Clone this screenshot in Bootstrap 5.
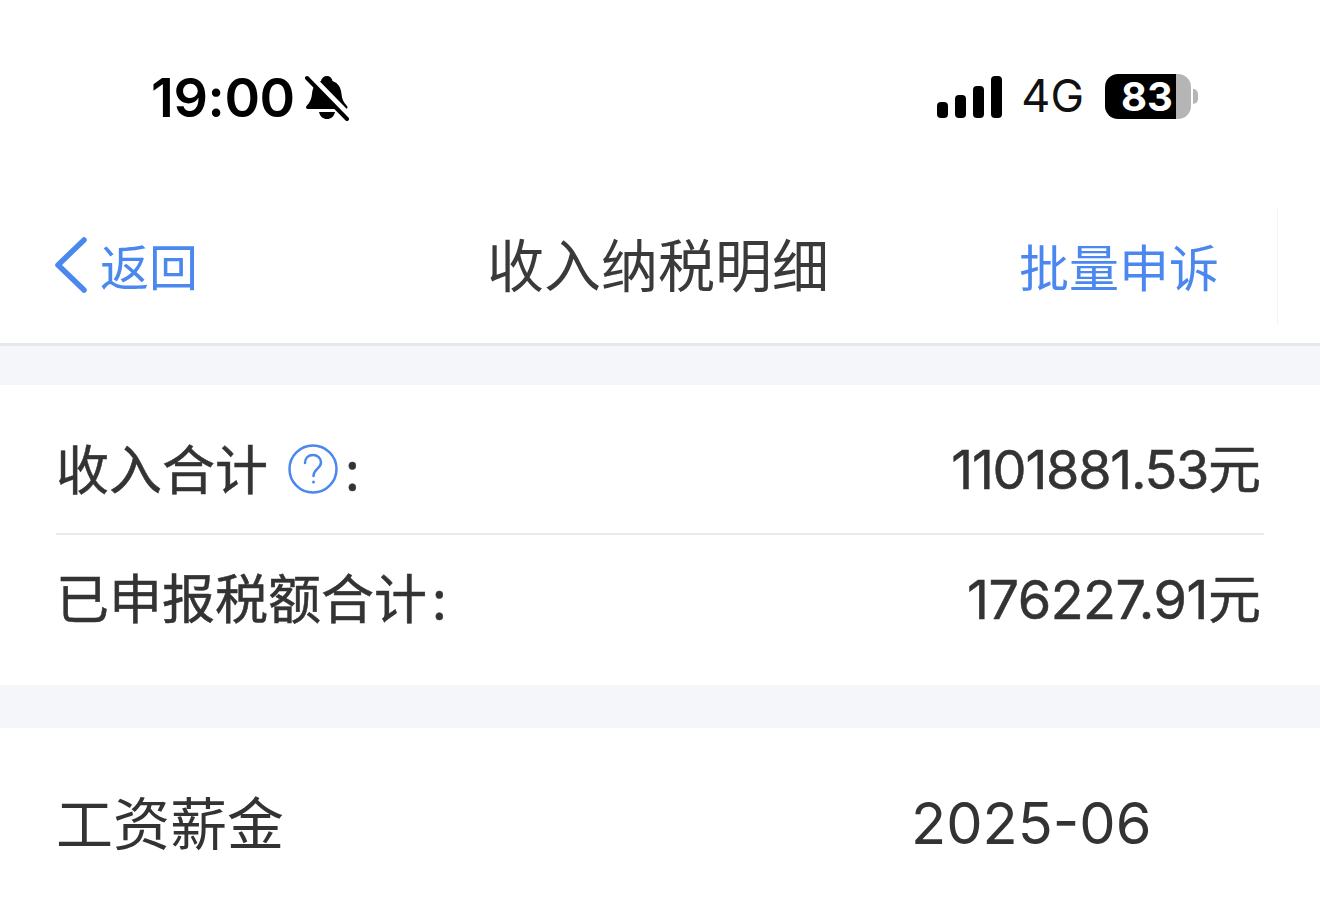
<!DOCTYPE html>
<html lang="zh-CN">
<head>
<meta charset="utf-8">
<title>收入纳税明细</title>
<link rel="stylesheet" href="https://cdn.jsdelivr.net/npm/bootstrap@5.3.0/dist/css/bootstrap.min.css">
<style>
html,body{height:899px;overflow:hidden;background:#fff;}
body{font-family:"Liberation Sans","Noto Sans CJK SC",sans-serif;color:#333;}
.status-strip{height:208px;padding:0 122px 0 151px;align-items:flex-start;}
.status-left{height:48px;margin-top:74px;gap:10px;}
.clock-text{font-family:Inter,"Liberation Sans",sans-serif;font-size:54px;font-weight:600;line-height:48px;color:#000;letter-spacing:-.4px;}
.status-right{height:48px;margin-top:72px;}
.signal-ico{margin:1px 0 0 1px;}
.net-text{font-family:Inter,"Liberation Sans",sans-serif;font-size:45px;line-height:48px;color:#111;margin:0 21px 0 18px;}
.batt-body{width:86px;height:45px;border-radius:13px;background:linear-gradient(90deg,#000 0,#000 83%,#b5b5b5 83%);color:#fff;font-family:Inter,"Liberation Sans",sans-serif;font-size:40px;font-weight:700;line-height:45px;padding-left:16px;}
.batt-nub{width:5px;height:15px;background:#b5b5b5;border-radius:0 5px 5px 0;margin-left:2px;}
.title-bar{height:138px;border-bottom:3px solid #e6e8eb;padding:0 0 21px 55px;position:relative;}
.back-link{width:290px;gap:13px;color:#4a87ee;font-size:49px;line-height:1;font-family:"Noto Sans CJK SC",sans-serif;}
.back-link span{margin-bottom:2px;}
.page-title{width:340px;margin:0 0 5px 142px;font-size:57px;line-height:1;color:#3a3a3a;white-space:nowrap;text-align:center;font-family:"Noto Sans CJK SC",sans-serif;}
.action-link{margin-left:192px;color:#4a87ee;font-size:50px;line-height:1;white-space:nowrap;font-family:"Noto Sans CJK SC",sans-serif;}
.edge-rule{position:absolute;left:1277px;top:1px;height:116px;width:1px;background:#f3f4f6;}
.gap-band{background:#f5f6fa;}
.band-one{height:39px;}
.band-two{height:43px;}
.sum-block{height:300px;padding:0 56px;}
.sum-row{font-size:53px;line-height:1;color:#333;font-family:"Noto Sans CJK SC",sans-serif;-webkit-text-stroke:.5px #333;}
.sum-first{height:150px;padding-top:19px;border-bottom:2px solid #e8e9ec;}
.sum-second{height:150px;padding:0 0 24px 0;}
.label-text{margin-bottom:3px;}
.colon-gap{margin-left:5px;}
.money-text{font-family:Inter,"Liberation Sans","Noto Sans CJK SC",sans-serif;font-size:54px;font-weight:400;letter-spacing:-1.3px;margin-right:3px;}
.sum-second .money-text{letter-spacing:-.5px;}
.money-text span{font-family:"Noto Sans CJK SC",sans-serif;letter-spacing:0;font-size:53px;}
.help-ico{margin:0 7px 0 20px;}
.detail-row{padding:64px 0 0 56px;font-size:57px;line-height:1;color:#333;font-family:"Noto Sans CJK SC",sans-serif;}
.date-text{font-family:Inter,"Liberation Sans",sans-serif;font-size:57.700px;margin:3px 0 0 627px;line-height:1;}
</style>
</head>
<body>
<div class="d-flex justify-content-between status-strip">
  <div class="d-flex align-items-center status-left">
    <span class="clock-text">19:00</span>
    <svg width="44" height="46" viewBox="0 0 44 46" role="img" aria-label="静音">
      <path d="M22 1c3 0 5 2 5.500 5 6 2 8.500 7 9 13 .4 5 2 8.500 5.500 12 1 1 .5 3-1.500 3H3c-2 0-2.500-2-1.500-3 3.500-3.500 5-7 5.500-12 .5-6 3-11 9-13C16.500 3 19 1 22 1z" fill="#000"/>
      <path d="M14 37h16c-1 4.500-4 7-8 7s-7-2.500-8-7z" fill="#000"/>
      <path d="M3 0 44 42" stroke="#fff" stroke-width="8"/>
      <path d="M2 3 42 44" stroke="#000" stroke-width="4" stroke-linecap="round"/>
    </svg>
  </div>
  <div class="d-flex align-items-center status-right">
    <svg class="signal-ico" width="66" height="42" viewBox="0 0 66 42" fill="#000" role="img" aria-label="信号">
      <rect x="0" y="26" width="11" height="16" rx="4"/>
      <rect x="18" y="19" width="11" height="23" rx="4"/>
      <rect x="36" y="10" width="11" height="32" rx="4"/>
      <rect x="54" y="0" width="11" height="42" rx="4"/>
    </svg>
    <span class="net-text">4G</span>
    <div class="batt-body">83</div>
    <div class="batt-nub"></div>
  </div>
</div>
<div class="d-flex align-items-center title-bar">
  <div class="d-flex align-items-center back-link">
    <svg width="32" height="56" viewBox="0 0 32 56" fill="none" stroke="#4a87ee" stroke-width="5.500" stroke-linecap="round" stroke-linejoin="round" aria-hidden="true"><path d="M29 3 3 28l26 25"/></svg>
    <span>返回</span>
  </div>
  <div class="page-title">收入纳税明细</div>
  <div class="action-link">批量申诉</div>
  <div class="edge-rule"></div>
</div>
<div class="gap-band band-one"></div>
<div class="sum-block">
  <div class="d-flex justify-content-between align-items-center sum-first sum-row">
    <div class="d-flex align-items-center">
      <span class="label-text">收入合计</span>
      <svg class="help-ico" width="50" height="50" viewBox="0 0 50 50" fill="none" stroke="#4a87ee" aria-hidden="true">
        <circle cx="25" cy="25" r="23.500" stroke-width="2.500"/>
        <path d="M17 19c0-5 3.500-8 8-8s8 3 8 7.500c0 6-7.500 6.500-7.500 13.500" stroke-width="2.500" stroke-linecap="round"/>
        <circle cx="25.500" cy="38" r="1.500" fill="#4a87ee" stroke="none"/>
      </svg>
      <span class="label-text">:</span>
    </div>
    <div class="money-text">1101881.53<span>元</span></div>
  </div>
  <div class="d-flex justify-content-between align-items-center sum-second sum-row">
    <div class="label-text">已申报税额合计<span class="colon-gap">:</span></div>
    <div class="money-text">176227.91<span>元</span></div>
  </div>
</div>
<div class="gap-band band-two"></div>
<div class="d-flex align-items-start detail-row">
  <span>工资薪金</span>
  <span class="date-text">2025-06</span>
</div>
<script src="https://cdn.jsdelivr.net/npm/bootstrap@5.3.0/dist/js/bootstrap.bundle.min.js"></script>
</body>
</html>
